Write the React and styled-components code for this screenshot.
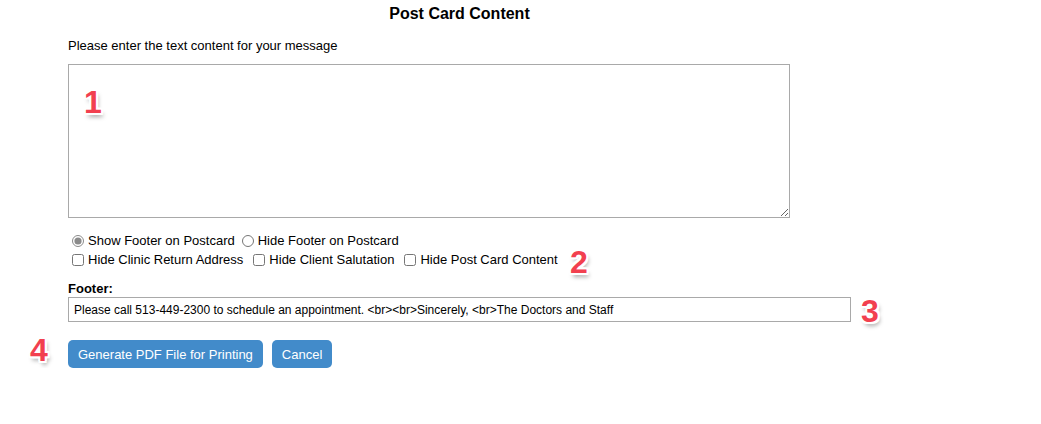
import React from 'react';
import styled, { createGlobalStyle } from 'styled-components';

const Global = createGlobalStyle`
  body {
    margin: 0;
    background: #ffffff;
    font-family: 'Liberation Sans', Arial, sans-serif;
    font-size: 13px;
    color: #000;
  }
`;

const Page = styled.div`
  position: relative;
  width: 783px;
  padding: 5px 0 0 68px;
`;

const Title = styled.h3`
  margin: 0;
  font-size: 16px;
  font-weight: bold;
  text-align: center;
  line-height: 18px;
`;

const Prompt = styled.p`
  margin: 15px 0 11px;
  line-height: 15px;
`;

const MessageBox = styled.textarea`
  display: block;
  box-sizing: border-box;
  width: 722px;
  height: 154px;
  margin: 0;
  border: 1px solid #a9a9a9;
  resize: both;
  font-family: inherit;
`;

const Options = styled.div`
  margin-top: 15px;
  padding-left: 4px;
  display: flex;
  flex-direction: column;
  gap: 4px;
`;

const OptionRow = styled.div`
  display: flex;
  align-items: center;
  gap: ${p => p.$gap || 6}px;
  line-height: 15px;
`;

const Choice = styled.label`
  display: inline-flex;
  align-items: center;
  gap: 4px;
`;

const Radio = styled.input.attrs({ type: 'radio' })`
  width: 12px;
  height: 12px;
  margin: 0;
  accent-color: #8a8a8a;
`;

const Check = styled.input.attrs({ type: 'checkbox' })`
  width: 12px;
  height: 12px;
  margin: 0;
`;

const FooterLabel = styled.div`
  margin-top: 15px;
  font-weight: bold;
  font-size: 13px;
  line-height: 14px;
`;

const FooterInput = styled.input`
  display: block;
  box-sizing: border-box;
  width: 783px;
  height: 25px;
  margin-top: 1px;
  padding: 0 5px;
  border: 1px solid #a9a9a9;
  font-family: inherit;
  font-size: 12px;
  color: #000;
`;

const Actions = styled.div`
  display: flex;
  gap: 9px;
  margin-top: 18px;
`;

const Button = styled.button`
  height: 28px;
  padding: 0 10px;
  border: none;
  border-radius: 5px;
  background: #428bca;
  color: #fff;
  font-family: inherit;
  font-size: 13px;
  cursor: pointer;
`;

const Marker = styled.span`
  position: absolute;
  left: ${p => p.$x}px;
  top: ${p => p.$y}px;
  font-family: 'Liberation Sans', Arial, sans-serif;
  font-size: 32px;
  font-weight: bold;
  line-height: 1;
  color: #f2404f;
  text-shadow:
    2px 0 0 #fff, -2px 0 0 #fff, 0 2px 0 #fff, 0 -2px 0 #fff,
    2px 2px 0 #fff, -2px -2px 0 #fff, 2px -2px 0 #fff, -2px 2px 0 #fff,
    2px 4px 4px rgba(0, 0, 0, 0.35);
`;

export default function App() {
  return (
    <Page>
      <Global />
      <Title>Post Card Content</Title>
      <Prompt>Please enter the text content for your message</Prompt>
      <MessageBox />
      <Options>
        <OptionRow $gap={7}>
          <Choice><Radio name="footer" defaultChecked /> Show Footer on Postcard</Choice>
          <Choice><Radio name="footer" /> Hide Footer on Postcard</Choice>
        </OptionRow>
        <OptionRow $gap={10}>
          <Choice><Check /> Hide Clinic Return Address</Choice>
          <Choice><Check /> Hide Client Salutation</Choice>
          <Choice><Check /> Hide Post Card Content</Choice>
        </OptionRow>
      </Options>
      <FooterLabel>Footer:</FooterLabel>
      <FooterInput defaultValue="Please call 513-449-2300 to schedule an appointment. <br><br>Sincerely, <br>The Doctors and Staff" />
      <Actions>
        <Button>Generate PDF File for Printing</Button>
        <Button>Cancel</Button>
      </Actions>
      <Marker $x={84} $y={86}>1</Marker>
      <Marker $x={570} $y={246}>2</Marker>
      <Marker $x={861} $y={295}>3</Marker>
      <Marker $x={30} $y={334}>4</Marker>
    </Page>
  );
}
